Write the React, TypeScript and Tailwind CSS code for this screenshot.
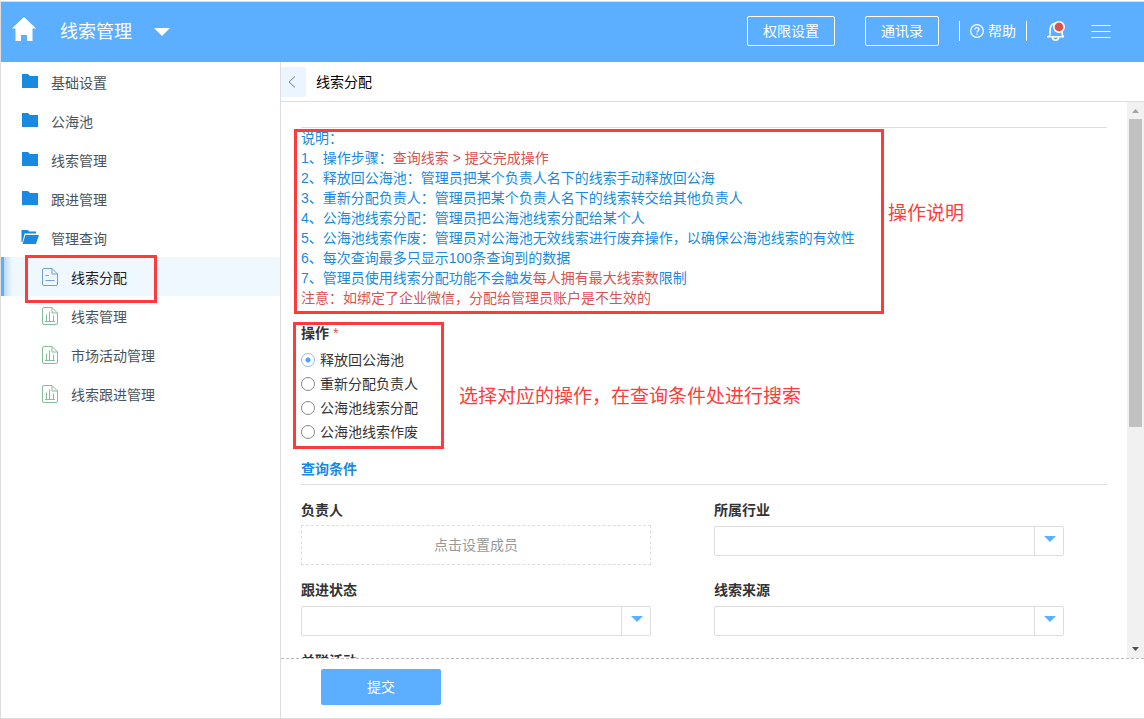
import React, { useState } from "react";

interface SelectFieldProps {
  id: string;
  label: string;
}

const folders = ["基础设置", "公海池", "线索管理", "跟进管理"];

const reports = ["线索管理", "市场活动管理", "线索跟进管理"];

const actions = ["释放回公海池", "重新分配负责人", "公海池线索分配", "公海池线索作废"];

const HomeIcon = () => (
  <svg width="24" height="24" viewBox="0 0 24 24" fill="#fff">
    <path d="M12 0L24 11.5H20.5V24H15V18H9V24H3.5V11.5H0Z" />
  </svg>
);

const FolderIcon = () => (
  <svg width="18" height="16" viewBox="0 0 18 16" fill="#188ae0">
    <path d="M1 1H7L9 3H17V15H1Z" />
  </svg>
);

const FolderOpenIcon = () => (
  <svg width="18" height="16" viewBox="0 0 18 16" fill="#188ae0">
    <path d="M0.5 1H6.5L8.5 2.6H15V4.6H3.6L1.4 13H0.5Z" />
    <path d="M4.4 6H18L15 15H1.6Z" />
  </svg>
);

const DocIcon = () => (
  <svg width="16" height="18" viewBox="0 0 16 18" fill="none" stroke="#6f9fd8">
    <path d="M2 0.5H10L15.5 6V16Q15.5 17.5 14 17.5H2Q0.5 17.5 0.5 16V2Q0.5 0.5 2 0.5Z" />
    <path d="M10 0.5V6H15.5M3.5 7.5H7M3.5 12.5H12.5" />
  </svg>
);

const ReportIcon = () => (
  <svg width="16" height="18" viewBox="0 0 16 18" fill="none" stroke="#86bd9c">
    <path d="M2 0.5H10L15.5 6V16Q15.5 17.5 14 17.5H2Q0.5 17.5 0.5 16V2Q0.5 0.5 2 0.5Z" />
    <path d="M10 0.5V6H15.5M3 14.5H13M4.5 14V7.5M7.5 14V4.5M11.5 14V8.5" />
  </svg>
);

const HelpIcon = () => (
  <svg width="14" height="14" viewBox="0 0 14 14" fill="none" stroke="#fff" strokeWidth="1.2">
    <circle cx="7" cy="7" r="6.3" />
    <path d="M5 5.6Q5 3.7 7 3.7Q9 3.7 9 5.4Q9 6.3 8 6.9Q7 7.4 7 8.6M7 9.6V10.8" />
  </svg>
);

const BellIcon = () => (
  <svg width="20" height="20" viewBox="0 0 20 20" fill="none" stroke="#fff" strokeWidth="1.6">
    <path d="M1 15.8H18M3.2 15.5Q4.2 14 4.2 8Q4.8 2.6 9.5 2.4M16 10.5Q16 14 17 15.5M6.4 16.5Q7 19.2 9.6 19.2Q12.2 19.2 12.8 16.5" />
    <circle cx="13" cy="6" r="5.2" fill="#d9534f" strokeWidth="1.6" />
  </svg>
);

const MenuIcon = () => (
  <svg width="20" height="14" viewBox="0 0 20 14" stroke="#fff">
    <path d="M0.5 1.5H19.5M0.5 7.5H19.5M0.5 13.5H19.5" />
  </svg>
);

const Caret = () => (
  <svg width="12" height="6" viewBox="0 0 12 6" fill="#5cafff">
    <path d="M0 0H12L6 6Z" />
  </svg>
);

const Red = ({ children }: { children: React.ReactNode }) => (
  <span className="text-[#d9534f]">{children}</span>
);

const SelectField: React.FC<SelectFieldProps> = ({ id, label }) => (
  <div>
    <label htmlFor={id} className="block font-bold leading-5">{label}</label>
    <div className="relative mt-1.5 max-w-[350px]">
      <select id={id} className="block h-[30px] w-full appearance-none rounded-xs border border-[#ddd] bg-white px-2">
        <option value=""></option>
      </select>
      <span className="pointer-events-none absolute inset-y-0 right-0 flex w-[30px] items-center justify-center border-l border-[#ddd] pb-1">
        <Caret />
      </span>
    </div>
  </div>
);

const TopBar = () => (
  <header className="flex h-[60px] shrink-0 items-center bg-[#5cafff] pr-[33px] pb-0.5 pl-[11px] text-white">
    <a href="#home" aria-label="首页" className="pb-1"><HomeIcon /></a>
    <button className="ml-6 flex items-center gap-[22px] pt-0.5 text-lg">
      线索管理
      <svg width="16" height="8" viewBox="0 0 16 8" fill="#fff">
        <path d="M0 0H16L8 8Z" />
      </svg>
    </button>
    <div className="ml-auto flex items-center">
      <button className="mr-[30px] h-[30px] rounded-xs border border-white px-[15px]">权限设置</button>
      <button className="mr-5 h-[30px] rounded-xs border border-white px-[15px]">通讯录</button>
      <a href="#help" className="mr-[19px] flex h-5 items-center gap-1 border-x border-white px-2.5">
        <HelpIcon />
        帮助
      </a>
      <button className="mr-[25px]" aria-label="消息"><BellIcon /></button>
      <button aria-label="菜单"><MenuIcon /></button>
    </div>
  </header>
);

const Sidebar = () => (
  <nav className="w-[280px] shrink-0 border-r border-[#ddd] text-[#4a545c]">
    {folders.map(name => (
      <a key={name} href="#folder" className="flex h-[39px] items-center gap-3 pt-0.5 pl-5">
        <span className="pb-1"><FolderIcon /></span>
        {name}
      </a>
    ))}
    <a href="#folder" className="flex h-[39px] items-center gap-3 pt-0.5 pl-5">
      <span className="pb-1"><FolderOpenIcon /></span>
      管理查询
    </a>
    <a href="#assign" className="relative flex h-[39px] items-center gap-[13px] border-l-3 border-[#5cafff] bg-[#eff7ff] pt-0.5 pl-[38px] text-[#222]">
      <span className="absolute inset-y-0 left-0 w-2 bg-linear-to-r from-[#b9d9f8] to-[#eff7ff]" />
      <span className="pb-0.5"><DocIcon /></span>
      线索分配
      <span className="absolute -top-0.5 left-[21px] h-12 w-[132px] border-3 border-[#ff3a3a]" />
    </a>
    {reports.map(name => (
      <a key={name} href="#report" className="flex h-[39px] items-center gap-[13px] pt-0.5 pl-[41px]">
        <span className="pb-0.5"><ReportIcon /></span>
        {name}
      </a>
    ))}
  </nav>
);

const Notes = () => (
  <section className="relative border-t border-[#ddd] leading-5 text-[#188ae0]">
    <p>说明：</p>
    <p>1、操作步骤：<Red>查询线索 &gt; 提交完成操作</Red></p>
    <p>2、释放回公海池：管理员把某个负责人名下的线索手动释放回公海</p>
    <p>3、重新分配负责人：管理员把某个负责人名下的线索转交给其他负责人</p>
    <p>4、公海池线索分配：管理员把公海池线索分配给某个人</p>
    <p>5、公海池线索作废：管理员对公海池无效线索进行废弃操作，以确保公海池线索的有效性</p>
    <p>6、每次查询最多只显示100条查询到的数据</p>
    <p>7、管理员使用线索分配功能不会触发<Red>每人拥有最大线索数</Red>限制</p>
    <p><Red>注意：如绑定了企业微信，分配给管理员账户是不生效的</Red></p>
    <div className="absolute top-px -left-[7px] h-[185px] w-[590px] border-3 border-[#ff3a3a]" />
    <p className="absolute top-[72px] left-[587px] text-[19px] leading-7 whitespace-nowrap text-[#ff3a3a]">操作说明</p>
  </section>
);

const Actions = () => {
  const [selected, setSelected] = useState(actions[0]);

  return (
    <div className="relative mt-[15px]">
      <fieldset>
        <legend className="mb-[5px] leading-5 font-bold">操作 <span className="font-normal text-[#d9534f]">*</span></legend>
        {actions.map(name => (
          <label key={name} className="flex h-6 items-center gap-[5px]">
            <input
              type="radio"
              name="action"
              checked={selected === name}
              onChange={() => setSelected(name)}
              className="size-[14px] appearance-none rounded-full border border-[#888] checked:border-[#8dbdf7] checked:bg-[radial-gradient(circle,#4aa3ff_2px,transparent_3px)]"
            />
            {name}
          </label>
        ))}
      </fieldset>
      <div className="pointer-events-none absolute -top-px -left-2 h-[127px] w-[151px] border-3 border-[#ff3a3a]" />
      <p className="absolute top-[60px] left-[158px] text-[19px] leading-7 whitespace-nowrap text-[#ff3a3a]">选择对应的操作，在查询条件处进行搜索</p>
    </div>
  );
};

const ScrollBar = () => (
  <div className="flex w-[17px] shrink-0 flex-col items-center bg-[#f1f1f1]">
    <svg className="shrink-0" width="17" height="17" viewBox="0 0 17 17" fill="#a3a3a3">
      <path d="M5 11H12L8.5 7Z" />
    </svg>
    <div className="w-[13px] grow">
      <div className="h-[59%] bg-[#c1c1c1]" />
    </div>
    <svg className="shrink-0" width="17" height="17" viewBox="0 0 17 17" fill="#505050">
      <path d="M5 6H12L8.5 10Z" />
    </svg>
  </div>
);

export default function App() {
  return (
    <div className="h-screen bg-white pt-px font-['Liberation_Sans','Noto_Sans_CJK_SC',sans-serif] text-sm text-[#333]">
      <div className="flex h-full flex-col border-y border-l border-[#ddd]">
        <TopBar />
        <div className="flex min-h-0 grow">
          <Sidebar />
          <main className="flex min-w-0 grow flex-col">
            <div className="flex h-10 shrink-0 items-center gap-2.5 border-b border-[#ddd]">
              <button className="flex h-[30px] w-[25px] items-center justify-center rounded-r-xs bg-[#ebf5ff] pr-1" aria-label="返回">
                <svg width="8" height="12" viewBox="0 0 8 12" fill="none" stroke="#6b7f99">
                  <path d="M7 0.5L1 6L7 11.5" />
                </svg>
              </button>
              <h1 className="text-black">线索分配</h1>
            </div>
            <div className="flex min-h-0 grow">
              <div className="min-w-0 grow overflow-hidden px-5 pt-[25px]">
                <Notes />
                <Actions />
                <h2 className="mt-[15px] border-b border-[#ddd] pb-[5px] leading-5 font-bold text-[#188ae0]">查询条件</h2>
                <div className="mt-[15px] grid grid-cols-2 gap-x-5 gap-y-[15px]">
                  <div>
                    <div id="owner" className="leading-5 font-bold">负责人</div>
                    <button aria-describedby="owner" className="mt-[5px] block h-10 w-full max-w-[350px] border border-dashed border-[#ddd] text-[#999]">点击设置成员</button>
                  </div>
                  <SelectField id="industry" label="所属行业" />
                  <SelectField id="status" label="跟进状态" />
                  <SelectField id="source" label="线索来源" />
                  <SelectField id="campaign" label="关联活动" />
                </div>
              </div>
              <ScrollBar />
            </div>
            <div className="flex h-[60px] shrink-0 items-center border-t border-dashed border-[#bbb] pb-[3px] pl-10">
              <button className="h-9 w-[120px] rounded-xs bg-[#5cafff] text-white">提交</button>
            </div>
          </main>
        </div>
      </div>
    </div>
  );
}
